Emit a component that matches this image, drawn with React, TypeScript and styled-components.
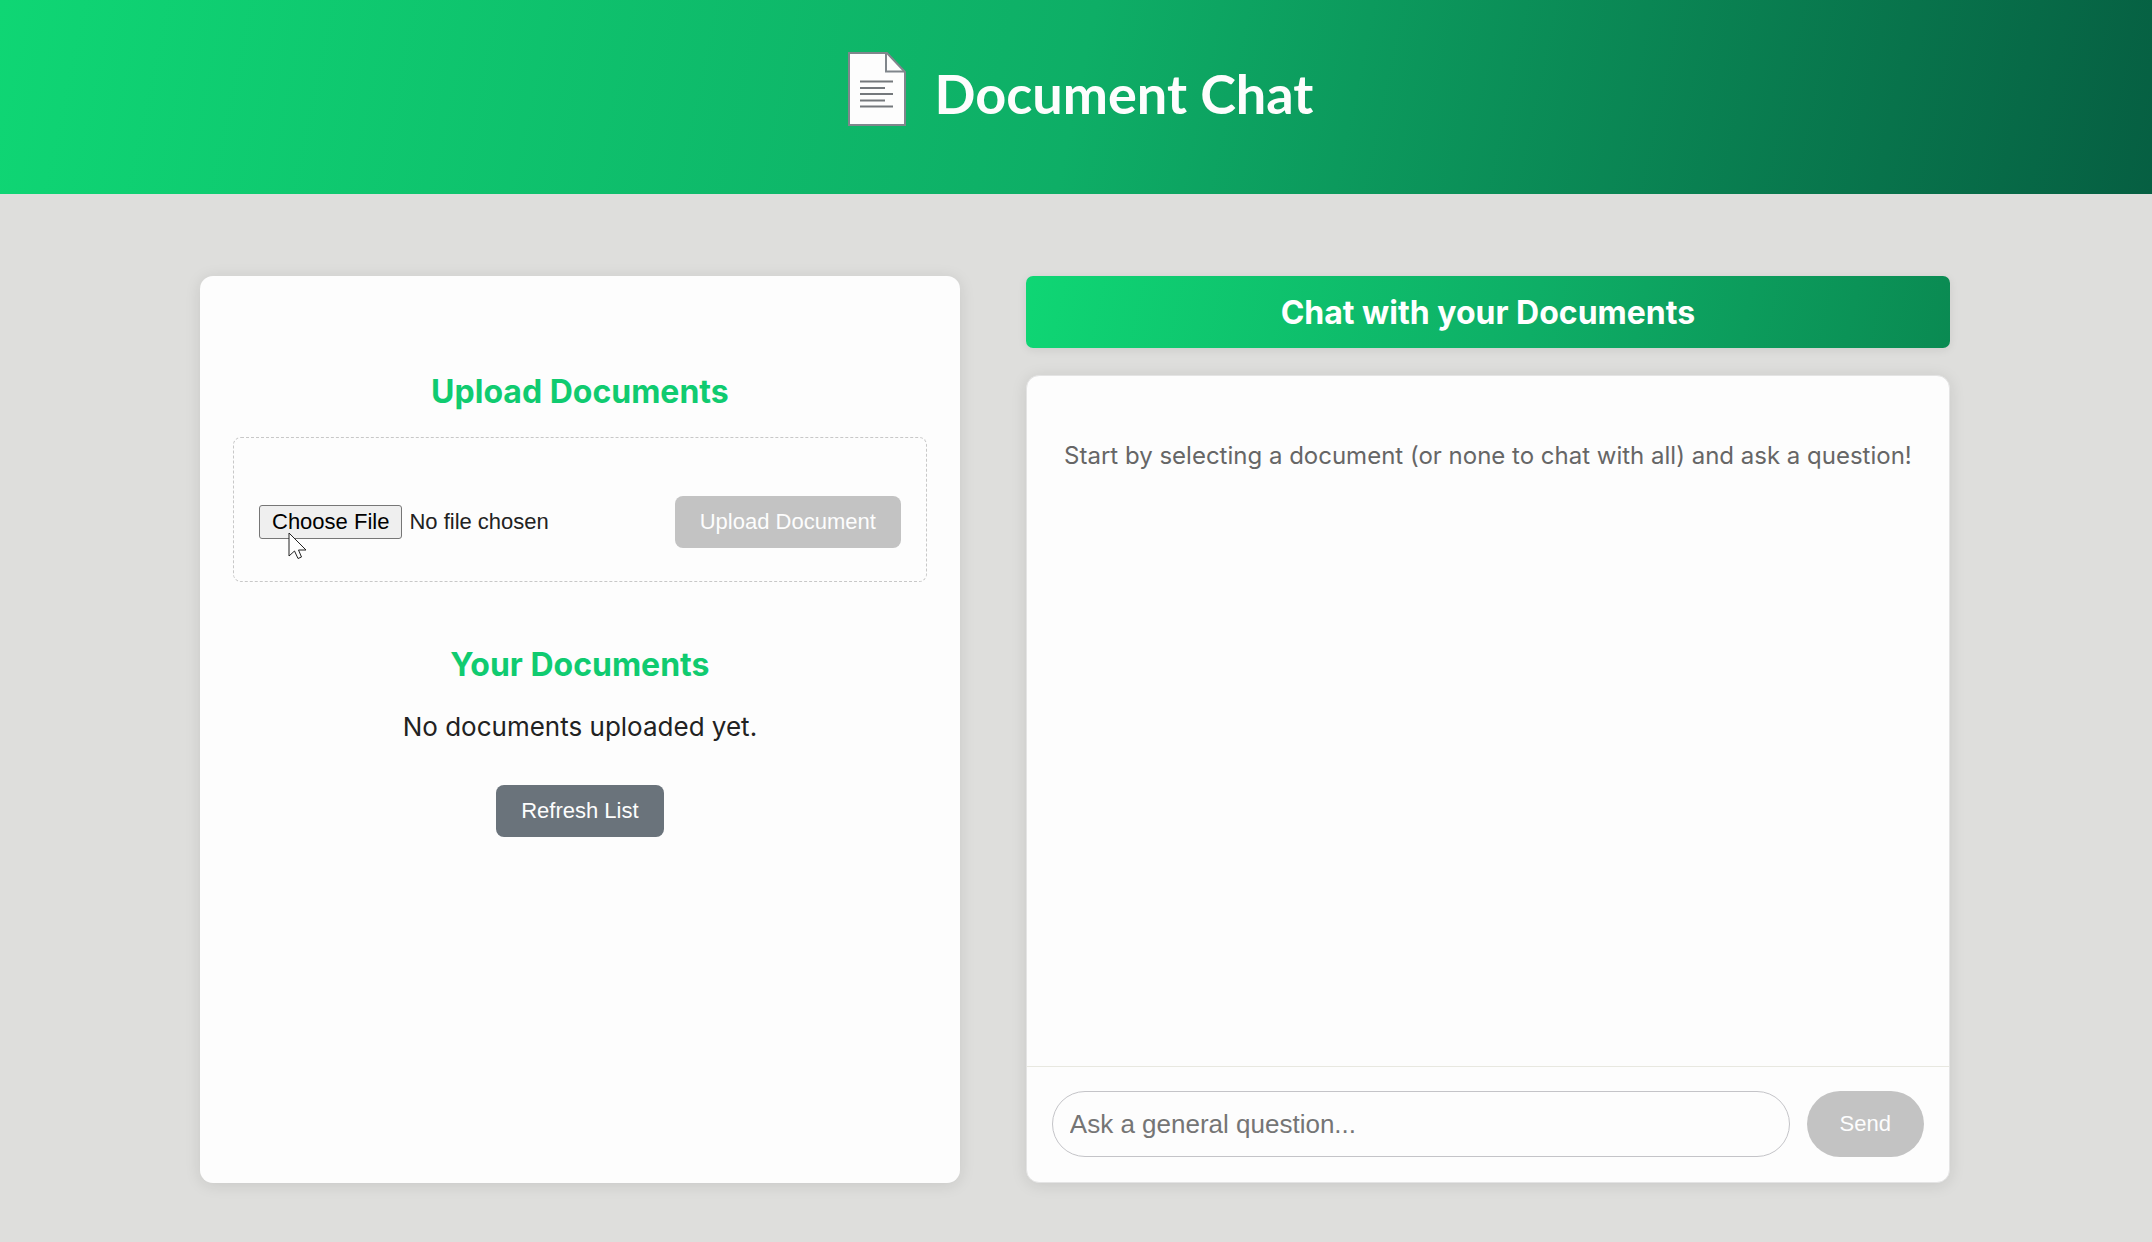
import React, { useState } from "react";
import styled, { createGlobalStyle } from "styled-components";

const GlobalStyle = createGlobalStyle`
  *, *::before, *::after { box-sizing: border-box; }
  body {
    margin: 0;
    background: #dededc;
    color: #222222;
    font-family: Inter, "Liberation Sans", sans-serif;
    font-size: 26px;
    line-height: 32px;
  }
`;

const Page = styled.div`
  min-height: 100vh;
  display: flex;
  flex-direction: column;
`;

const Header = styled.header`
  display: flex;
  align-items: center;
  justify-content: center;
  gap: 29px;
  height: 194px;
  padding-bottom: 6px;
  background: linear-gradient(102deg, #0fd674 0%, #0eae66 50%, #065f42 100%);
`;

const DocumentIcon = styled.svg`
  width: 58px;
  height: 74px;
  margin: 0 0 10px 9px;
`;

const Title = styled.h1`
  margin: 0;
  color: #fdfdfd;
  font-family: Lato, "Noto Sans", sans-serif;
  font-size: 54px;
  font-weight: 700;
  line-height: 64px;
`;

const Main = styled.main`
  flex: 1;
  display: grid;
  grid-template-columns: minmax(0, 37fr) minmax(0, 45fr);
  gap: 66px;
  padding: 82px 202px 59px 200px;
`;

const Card = styled.section`
  background: #fdfdfd;
  border-radius: 13px;
  box-shadow: 0 2px 16px rgba(0, 0, 0, 0.1);
`;

const DocumentsCard = styled(Card)`
  display: flex;
  flex-direction: column;
  align-items: center;
  padding: 96px 33px 33px;
`;

const Heading = styled.h2`
  margin: 0;
  color: #10cb70;
  font-size: 32px;
  font-weight: 700;
  line-height: 40px;
`;

const UploadForm = styled.form`
  position: relative;
  display: flex;
  align-items: center;
  justify-content: space-between;
  align-self: stretch;
  margin: 25px 0 63px;
  padding: 58px 25px 33px;
  border: 1px dashed #c8c8c8;
  border-radius: 8px;
`;

const FileInput = styled.input`
  min-width: 0;
  color: #222222;
  font: 22px/26px "Liberation Sans", Arial, sans-serif;

  &::file-selector-button {
    margin-right: 7px;
    padding: 3px 12px;
    border: 1px solid #767676;
    border-radius: 3px;
    background: #efefef;
    color: #000000;
    font: 22px/26px "Liberation Sans", Arial, sans-serif;
  }
`;

const Pointer = styled.svg`
  position: absolute;
  left: 54px;
  top: 94px;
  width: 20px;
  height: 28px;
`;

const Button = styled.button<{ $tone?: "muted" | "slate" }>`
  flex-shrink: 0;
  height: 52px;
  padding: 0 25px;
  border: 0;
  border-radius: 8px;
  background: ${({ $tone }) => ($tone === "slate" ? "#6a737b" : "#c3c3c3")};
  color: #fdfdfd;
  font: 22px/26px "Liberation Sans", Arial, sans-serif;
  white-space: nowrap;
`;

const EmptyText = styled.p`
  margin: 26px 0 42px;
`;

const ChatColumn = styled.div`
  display: flex;
  flex-direction: column;
  gap: 27px;
`;

const Banner = styled.h2`
  margin: 0;
  padding: 17px 16px 15px;
  border-radius: 7px;
  background: linear-gradient(102deg, #0fd674, #0eae66 55%, #0a8a52);
  box-shadow: 0 2px 10px rgba(0, 0, 0, 0.08);
  color: #ffffff;
  font-size: 32px;
  font-weight: 700;
  line-height: 40px;
  text-align: center;
`;

const ChatCard = styled(Card)`
  flex: 1;
  display: flex;
  flex-direction: column;
  border: 1px solid #e4e4e4;
`;

const Messages = styled.div`
  flex: 1;
  padding: 64px 26px 26px;
  color: #666666;
  font-size: 24px;
  text-align: center;
`;

const ChatForm = styled.form`
  display: flex;
  gap: 17px;
  padding: 24px 25px 25px;
  border-top: 1px solid #e8e8e0;
`;

const QuestionInput = styled.input`
  flex: 1;
  min-width: 0;
  height: 66px;
  padding: 0 17px;
  border: 1px solid #c4c4c8;
  border-radius: 33px;
  background: transparent;
  font: 26px/32px "Liberation Sans", Arial, sans-serif;

  &::placeholder {
    color: #757575;
    opacity: 1;
  }
`;

const SendButton = styled(Button)`
  height: 66px;
  padding: 0 33px;
  border-radius: 33px;
`;

export default function App() {
  const [question, setQuestion] = useState("");

  return (
    <Page>
      <GlobalStyle />
      <Header>
        <DocumentIcon viewBox="0 0 58 74" aria-hidden="true">
          <path d="M1 1H39L57 20V73H1Z" fill="#fdfdfd" stroke="#80868c" strokeWidth="2" />
          <path d="M38 1V19.500H57" fill="none" stroke="#80868c" strokeWidth="2" />
          <path
            d="M12 29.500H45M12 36H37M12 42H45M12 48.500H37M12 54.500H45"
            stroke="#74787c"
            strokeWidth="2"
          />
        </DocumentIcon>
        <Title>Document Chat</Title>
      </Header>
      <Main>
        <DocumentsCard>
          <Heading>Upload Documents</Heading>
          <UploadForm onSubmit={(event) => event.preventDefault()}>
            <FileInput type="file" aria-label="Document file" />
            <Button type="submit" disabled>
              Upload Document
            </Button>
            <Pointer viewBox="0 0 20 28" aria-hidden="true">
              <path
                d="M1 1V24L6.500 19L10 26.500L13.500 25L10.500 18H18Z"
                fill="#fdfdfd"
                stroke="#222222"
                strokeWidth="1"
              />
            </Pointer>
          </UploadForm>
          <Heading>Your Documents</Heading>
          <EmptyText>No documents uploaded yet.</EmptyText>
          <Button type="button" $tone="slate">
            Refresh List
          </Button>
        </DocumentsCard>
        <ChatColumn>
          <Banner>Chat with your Documents</Banner>
          <ChatCard>
            <Messages>
              Start by selecting a document (or none to chat with all) and ask a question!
            </Messages>
            <ChatForm onSubmit={(event) => event.preventDefault()}>
              <QuestionInput
                type="text"
                aria-label="Question"
                placeholder="Ask a general question..."
                value={question}
                onChange={(event) => setQuestion(event.target.value)}
              />
              <SendButton type="submit" disabled>
                Send
              </SendButton>
            </ChatForm>
          </ChatCard>
        </ChatColumn>
      </Main>
    </Page>
  );
}
